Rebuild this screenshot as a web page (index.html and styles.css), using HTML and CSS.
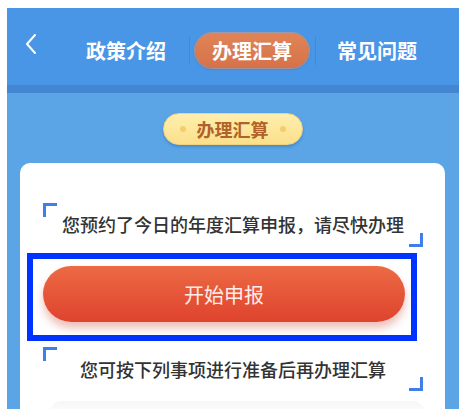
FILE: index.html
```html
<!DOCTYPE html>
<html>

<head>
    <meta name="viewport" content="width=device-width, initial-scale=1">
    <title>办理汇算</title>

    <link rel="stylesheet" href="styles.css">

</head>

<body>
    <div class="page">
        <div class="header">
            <svg class="back" width="12" height="20" viewBox="0 0 12 20">
                <path d="M10 1 L2 10 L10 19" fill="none" stroke="#fff" stroke-width="2" stroke-linecap="round" stroke-linejoin="round" />
            </svg>
            <span class="tab first">政策介绍</span>
            <span class="sep sep-left"></span>
            <span class="tab active">办理汇算</span>
            <span class="sep sep-right"></span>
            <span class="tab last">常见问题</span>
        </div>
        <div class="strip"></div>

        <div class="content">
            <div class="badge">
                <span class="dot"></span>
                <span class="badge-text">办理汇算</span>
                <span class="dot"></span>
            </div>

            <div class="card">
                <div class="notice first-notice">您预约了今日的年度汇算申报，请尽快办理</div>

                <div class="highlight">
                    <button class="start">开始申报</button>
                </div>

                <div class="notice">您可按下列事项进行准备后再办理汇算</div>

                <div class="next"></div>
            </div>
        </div>
    </div>
</body>

</html>
```

FILE: styles.css
```css
body {
    margin: 0;
    padding-top: 8px;
    background-color: #fff;
    font-family: "Noto Sans CJK SC", "Noto Sans", sans-serif;
}

.page {
    width: 452px;
    height: 401px;
    margin-left: 7px;
    overflow: hidden;
    display: flex;
    flex-direction: column;
}

/* top tab bar */
.header {
    flex: none;
    height: 69px;
    padding-top: 8px;
    background-color: #4a96e6;
    display: flex;
    align-items: center;
}

.back {
    margin-left: 18px;
    margin-bottom: 13px;
    flex: none;
}

.tab {
    color: #fff;
    font-size: 20px;
    font-weight: 700;
    line-height: 35px;
    white-space: nowrap;
}

.tab.first {
    margin-left: 49px;
}

.tab.active {
    margin-left: 5px;
    padding: 0 17px;
    height: 35px;
    border-radius: 18px;
    background: linear-gradient(#e08457, #d67249);
    box-shadow: 0 0 0 1px rgba(240, 160, 120, 0.5), 0 1px 3px rgba(120, 60, 30, 0.3);
}

.tab.last {
    margin-left: 21px;
}

.sep {
    width: 1px;
    height: 28px;
    background-color: #3f89d9;
}

.sep-left {
    margin-left: 23px;
}

.sep-right {
    margin-left: 6px;
}

.strip {
    flex: none;
    height: 8px;
    background-color: #4586d2;
}

/* blue body */
.content {
    flex: 1;
    min-height: 0;
    background-color: #5ba5e7;
    padding: 20px 14px 0 13px;
    display: flex;
    flex-direction: column;
    align-items: center;
}

.badge {
    flex: none;
    width: 140px;
    height: 32px;
    box-sizing: border-box;
    border-radius: 16px;
    background: linear-gradient(#feeeae, #fbe08a);
    border: 1px solid #f2d27a;
    box-shadow: 0 2px 3px rgba(40, 90, 150, 0.35);
    display: flex;
    align-items: center;
    justify-content: space-between;
    padding: 0 16px;
}

.dot {
    width: 6px;
    height: 6px;
    border-radius: 50%;
    background-color: #f2cf6b;
}

.badge-text {
    color: #b0622a;
    font-size: 18px;
    font-weight: 700;
}

.card {
    flex: none;
    margin-top: 18px;
    align-self: stretch;
    background-color: #fff;
    border-radius: 10px 10px 0 0;
    padding-top: 40px;
}

.notice {
    position: relative;
    margin: 0 22px 0 23px;
    height: 44px;
    display: flex;
    align-items: center;
    justify-content: center;
    color: #333;
    font-size: 18px;
    font-weight: 500;
    white-space: nowrap;
}

.notice:before,
.notice:after {
    content: "";
    position: absolute;
    width: 11px;
    height: 11px;
    border-color: #3f7fe8;
    border-style: solid;
}

.notice:before {
    top: 0;
    left: 0;
    border-width: 3px 0 0 3px;
}

.notice:after {
    bottom: 0;
    right: 0;
    border-width: 0 3px 3px 0;
}

.first-notice {
    padding-bottom: 2px;
    box-sizing: border-box;
}

/* marked area round the button */
.highlight {
    margin: 6px 28px 6px 7px;
    height: 88px;
    box-sizing: border-box;
    border: 6px solid #0033ff;
    padding: 7px 6px 0 10px;
}

.start {
    width: 100%;
    height: 56px;
    border: none;
    border-radius: 28px;
    background: linear-gradient(#ec6a44, #df432d);
    box-shadow: 0 6px 9px rgba(200, 70, 50, 0.35);
    color: #fdecea;
    font-family: "Noto Sans CJK SC", "Noto Sans", sans-serif;
    font-size: 20px;
    cursor: pointer;
}

.next {
    margin: 10px 20px 0 30px;
    height: 30px;
    border-radius: 12px;
    background: linear-gradient(#f7f7f7, #fff 60%);
}
```
